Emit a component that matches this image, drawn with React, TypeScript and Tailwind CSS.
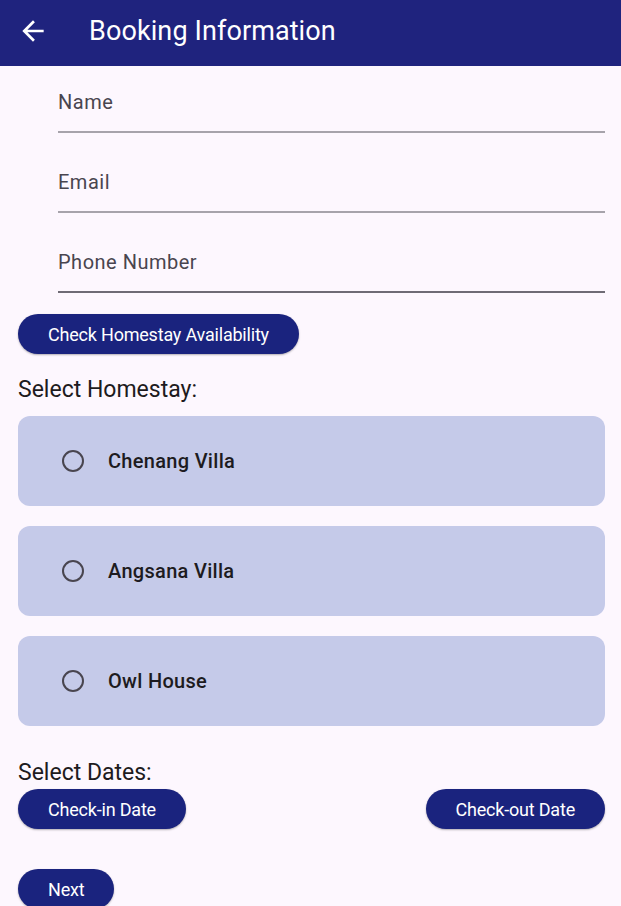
import React from "react";

const font = { fontFamily: "Roboto, 'Noto Sans', sans-serif" };

function Field({ label, dark, first }: { label: string; dark?: boolean; first?: boolean }) {
  return (
    <div className={(first ? "h-[67px]" : "h-[80px]") + " flex flex-col justify-end"}>
      <div className="text-[20px] tracking-[0.5px] text-[#49454f] leading-none mb-[19px]">{label}</div>
      <div className={dark ? "h-[2px] bg-[#6f6b75]" : "h-[2px] bg-[#a7a3ab]"} />
    </div>
  );
}

function Pill({ children, className = "" }: { children: React.ReactNode; className?: string }) {
  return (
    <button
      className={
        "h-[40px] rounded-full bg-[#1a237e] text-white text-[18px] tracking-[-0.2px] px-[30px] shadow-[0_1px_2px_rgba(0,0,0,0.3)] " +
        className
      }
    >
      {children}
    </button>
  );
}

function Card({ label }: { label: string }) {
  return (
    <div className="h-[90px] rounded-[12px] bg-[#c5cae9] flex items-center pl-[44px]">
      <div className="w-[22px] h-[22px] rounded-full border-[2px] border-[#49454f]" />
      <div className="ml-[24px] text-[20px] font-medium text-[#1d1b20] tracking-[0.3px]">{label}</div>
    </div>
  );
}

export default function App() {
  return (
    <div className="w-[621px] h-[906px] overflow-hidden bg-[#fdf7fe]" style={font}>
      <div className="h-[66px] bg-[#1f237e] flex items-center pb-[4px]">
        <svg width="32" height="32" viewBox="0 0 24 24" className="ml-[17px]">
          <path d="M20 11H7.83l5.59-5.59L12 4l-8 8 8 8 1.41-1.41L7.83 13H20v-2z" fill="white" />
        </svg>
        <div className="ml-[40px] text-white text-[27px] tracking-[0.1px] leading-none">Booking Information</div>
      </div>
      <div className="pl-[18px] pr-[16px]">
        <div className="pl-[40px]">
          <Field label="Name" first />
          <Field label="Email" />
          <Field label="Phone Number" dark />
        </div>
        <div className="mt-[21px]">
          <Pill>Check Homestay Availability</Pill>
        </div>
        <div className="mt-[24px] text-[23px] text-[#1d1b20] leading-none">Select Homestay:</div>
        <div className="mt-[15px] flex flex-col gap-[20px]">
          <Card label="Chenang Villa" />
          <Card label="Angsana Villa" />
          <Card label="Owl House" />
        </div>
        <div className="mt-[35px] text-[23px] text-[#1d1b20] leading-none">Select Dates:</div>
        <div className="mt-[5px] flex justify-between">
          <Pill>Check-in Date</Pill>
          <Pill>Check-out Date</Pill>
        </div>
        <div className="mt-[40px]">
          <Pill>Next</Pill>
        </div>
      </div>
    </div>
  );
}
